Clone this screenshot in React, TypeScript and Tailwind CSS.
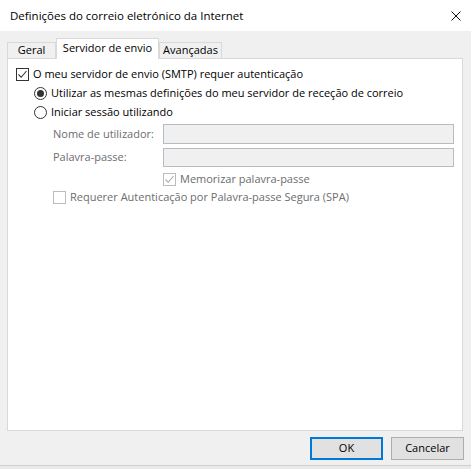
import type { ReactNode } from "react";

const font = { fontFamily: '"Open Sans", "Noto Sans", sans-serif' };

const Check = ({ checked, disabled }: { checked?: boolean; disabled?: boolean }) => (
  <span
    className={`flex h-[13px] w-[13px] shrink-0 items-center justify-center border bg-white ${
      disabled ? "border-[#bcbcbc]" : "border-[#333333]"
    }`}
  >
    {checked && (
      <svg width="11" height="11" viewBox="0 0 11 11">
        <path d="M1.5 5.5 L4.2 8.3 L9.5 2" fill="none" stroke={disabled ? "#a8a8a8" : "#333333"} strokeWidth="1.1" />
      </svg>
    )}
  </span>
);

const Radio = ({ checked }: { checked?: boolean }) => (
  <span className="flex h-[13px] w-[13px] shrink-0 items-center justify-center rounded-full border border-[#333333] bg-white">
    {checked && <span className="h-[7px] w-[7px] rounded-full bg-[#333333]" />}
  </span>
);

const Tab = ({ children, active, w }: { children: ReactNode; active?: boolean; w: string }) =>
  active ? (
    <div className={`relative z-10 -mb-px flex h-[21px] items-start justify-center border border-b-0 border-[#d9d9d9] bg-white pt-[1px] text-black ${w}`}>
      {children}
    </div>
  ) : (
    <div className={`flex h-[16px] items-center justify-center border border-b-0 border-[#d9d9d9] bg-[#f0f0f0] text-black ${w}`}>
      {children}
    </div>
  );

export default function App() {
  return (
    <div className="flex h-[469px] w-[471px] flex-col bg-[#f0f0f0] text-[11px] text-black" style={font}>
      <div className="flex h-[31px] shrink-0 items-center justify-between bg-white pl-[10px] pr-[10px]">
        <span className="text-[11.5px]">Definições do correio eletrónico da Internet</span>
        <svg width="10" height="10" viewBox="0 0 10 10">
          <path d="M0.5 0.5 L9.5 9.5 M9.5 0.5 L0.5 9.5" stroke="#111" strokeWidth="1" />
        </svg>
      </div>

      <div className="flex flex-1 flex-col px-[7px] pt-[7px]">
        <div className="flex items-end">
          <Tab w="w-[49px]">Geral</Tab>
          <Tab active w="w-[103px]">Servidor de envio</Tab>
          <Tab w="w-[63px]">Avançadas</Tab>
        </div>

        <div className="flex h-[373px] w-[456px] flex-col border border-[#d9d9d9] bg-white pl-[8px]">
          <label className="mt-[6px] flex h-[19px] items-center gap-[4px]">
            <Check checked />
            <span>O meu servidor de envio (SMTP) requer autenticação</span>
          </label>
          <label className="ml-[18px] flex h-[19px] items-center gap-[4px]">
            <Radio checked />
            <span>Utilizar as mesmas definições do meu servidor de receção de correio</span>
          </label>
          <label className="ml-[18px] flex h-[19px] items-center gap-[4px]">
            <Radio />
            <span>Iniciar sessão utilizando</span>
          </label>
          <div className="ml-[37px] mt-[2px] flex h-[20px] items-center text-[#6d6d6d]">
            <span className="w-[110px] shrink-0">Nome de utilizador:</span>
            <div className="h-[20px] w-[291px] border border-[#b5bcc4] bg-[#f0f0f0]" />
          </div>
          <div className="ml-[37px] mt-[4px] flex h-[19px] items-center text-[#6d6d6d]">
            <span className="w-[110px] shrink-0">Palavra-passe:</span>
            <div className="h-[19px] w-[291px] border border-[#b5bcc4] bg-[#f0f0f0]" />
          </div>
          <label className="ml-[147px] mt-[3px] flex h-[18px] items-center gap-[4px] text-[#6d6d6d]">
            <Check checked disabled />
            <span>Memorizar palavra-passe</span>
          </label>
          <label className="ml-[37px] flex h-[18px] items-center gap-[4px] text-[#6d6d6d]">
            <Check disabled />
            <span>Requerer Autenticação por Palavra-passe Segura (SPA)</span>
          </label>
        </div>

        <div className="mt-[6px] flex justify-end gap-[8px]">
          <button className="flex h-[23px] w-[73px] items-center justify-center border-2 border-[#0078d7] bg-[#e1e1e1] text-black">
            OK
          </button>
          <button className="flex h-[23px] w-[73px] items-center justify-center border border-[#adadad] bg-[#e1e1e1] text-black">
            Cancelar
          </button>
        </div>
      </div>

      <div className="h-[4px] shrink-0 border-t border-[#cfcfcf] bg-[#e9e9e9]" />
    </div>
  );
}
